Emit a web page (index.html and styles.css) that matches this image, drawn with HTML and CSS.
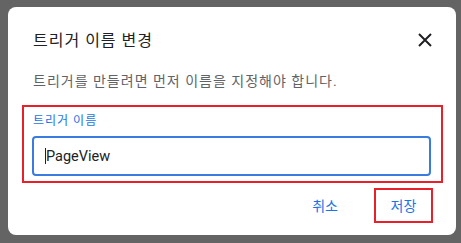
FILE: index.html
```html
<!DOCTYPE html>
<html lang="ko">
<head>
<meta charset="utf-8">
<link rel="stylesheet" href="styles.css">
</head>
<body>
<div class="backdrop">
  <div class="dialog">
    <div class="header">
      <h2 class="title">트리거 이름 변경</h2>
      <button class="close" aria-label="닫기">
        <svg width="14" height="14" viewBox="0 0 14 14"><path d="M1 1L13 13M13 1L1 13" stroke="#202124" stroke-width="2" fill="none"/></svg>
      </button>
    </div>
    <p class="desc">트리거를 만들려면 먼저 이름을 지정해야 합니다.</p>
    <div class="highlight field">
      <label class="label">트리거 이름</label>
      <div class="input"><span class="caret"></span>PageView</div>
    </div>
    <div class="actions">
      <button class="btn">취소</button>
      <button class="btn save">저장</button>
    </div>
  </div>
</div>
</body>
</html>
```
FILE: styles.css
```css
html, body {
  margin: 0;
  padding: 0;
  background: #646464;
}
body {
  width: 461px;
  height: 243px;
  overflow: hidden;
  font-family: Roboto, "Noto Sans CJK KR", sans-serif;
}
.backdrop {
  padding: 7px 5px 0 8px;
}
.dialog {
  width: 448px;
  height: 228px;
  background: #fff;
  border-radius: 8px;
  box-sizing: border-box;
  padding: 0 0 0 14px;
}
.header {
  display: flex;
  align-items: center;
  justify-content: space-between;
  padding: 24px 24px 0 11px;
  height: 20px;
}
.title {
  margin: 0;
  font-size: 16px;
  letter-spacing: 1px;
  font-weight: 400;
  color: #202124;
  line-height: 20px;
}
.close {
  border: 0;
  background: none;
  padding: 0;
  width: 14px;
  height: 14px;
  display: flex;
  margin-top: -3px;
}
.desc {
  margin: 20px 0 0 11px;
  font-size: 14px;
  letter-spacing: 1px;
  line-height: 20px;
  color: #5f6368;
}
.field {
  margin: 14px 0 0 0;
  width: 421px;
  height: 78px;
  box-sizing: border-box;
  border: 2px solid #e8202a;
  padding: 6px 10px 0 8px;
}
.label {
  display: block;
  font-size: 12px;
  letter-spacing: 1px;
  line-height: 16px;
  color: #1a73e8;
  padding-left: 1px;
}
.input {
  margin-top: 7px;
  height: 40px;
  box-sizing: border-box;
  border: 2px solid #3a7be0;
  border-radius: 4px;
  display: flex;
  align-items: center;
  padding-left: 11px;
  font-size: 14.5px;
  color: #202124;
}
.caret {
  display: inline-block;
  width: 1px;
  height: 16px;
  background: #202124;
}
.actions {
  display: flex;
  justify-content: flex-end;
  align-items: center;
  gap: 22px;
  margin: 5px 0 0 0;
  padding-right: 23px;
}
.btn {
  border: 0;
  background: none;
  font-family: Roboto, "Noto Sans CJK KR", sans-serif;
  font-size: 14px;
  color: #1a73e8;
  padding: 0 14px;
  height: 35px;
  line-height: 20px;
}
.save {
  border: 2px solid #e8202a;
  width: 59px;
  padding: 0;
}
```
